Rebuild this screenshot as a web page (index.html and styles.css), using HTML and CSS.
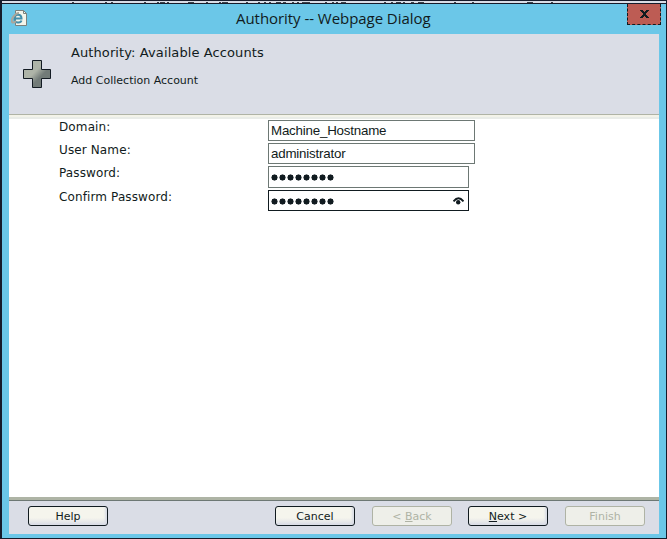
FILE: index.html
```html
<!DOCTYPE html>
<html lang="en">
<head>
<meta charset="utf-8">
<title>Authority -- Webpage Dialog</title>
<link rel="stylesheet" href="styles.css">
</head>
<body>
<div class="backdrop">
<svg width="667" height="2" shape-rendering="crispEdges"><path stroke="#3a414a" stroke-width="1" d="M72 1.500h2M105 1.500h2M111 1.500h2M144 1.500h2M157 1.500h2M160 1.500h5M167 1.500h2M188 1.500h6M206 1.500h2M219 1.500h2M222 1.500h6M246 1.500h2M258 1.500h2M264 1.500h2M269 1.500h2M276 1.500h5M283 1.500h3M292 1.500h2M297 1.500h2M302 1.500h8M325 1.500h2M332 1.500h2M336 1.500h2M341 1.500h5M384 1.500h2M391 1.500h2M396 1.500h5M403 1.500h2M411 1.500h3M418 1.500h6M454 1.500h2M472 1.500h2M527 1.500h6M551 1.500h2"/></svg>
</div>
<div class="window">
<header class="titlebar">
<svg class="ie" width="18" height="18" viewBox="0 0 18 18"><path d="M4.500 .5h8l3 3v12h-11z" fill="#f5f5eb" stroke="#7b817d"/><path d="M12.500 .5v3h3" fill="none" stroke="#7b817d"/><path d="M3.500 8.500h7c0-5-7-5-7 0s6 5 7 2" fill="none" stroke="#438eaa" stroke-width="2"/><path d="M8 3c-4 0-8 6-7 9 1 1 3 0 4-1" fill="none" stroke="#aaa69b" stroke-width="2"/></svg>
<h1 class="title">Authority -- Webpage Dialog</h1>
<button class="close" aria-label="Close"><svg width="9" height="8" viewBox="0 0 9 8" shape-rendering="crispEdges"><path fill="#111b20" d="M0 0h3v1h1v1h1V1h1V0h3v1H8v1H7v1H6v2h1v1h1v1h1v1H6V7H5V6H4v1H3v1H0V7h1V6h1V5h1V3H2V2H1V1H0z"/></svg></button>
</header>
<main class="content">
<section class="heading">
<svg class="plus" width="28" height="28" viewBox="0 0 28 28"><defs><linearGradient id="metal" x1="0" y1="0" x2="1" y2="1"><stop offset=".42" stop-color="#aeb4a8"/><stop offset=".62" stop-color="#727b78"/></linearGradient></defs><path d="M9.500 .5h9v9h9v9h-9v9h-9v-9h-9v-9h9z" fill="url(#metal)" stroke="#131b23"/></svg>
<div class="heading-text"><h2>Authority: Available Accounts</h2><p>Add Collection Account</p></div>
</section>
<div class="divider"></div>
<form class="form">
<label>Domain:</label><div class="field">Machine_Hostname</div>
<label>User Name:</label><div class="field">administrator</div>
<label>Password:</label><div class="field short"><span class="dots"></span></div>
<label>Confirm Password:</label><div class="field active"><span class="dots"></span><svg width="11" height="8" viewBox="0 0 11 8"><path d="M.5 4.500Q5.500-2 10.500 4.500" fill="none" stroke="#111b20" stroke-width="2"/><circle cx="5.200" cy="5.300" r="2.200" fill="#111b20"/></svg></div>
</form>
<footer class="footer">
<button class="btn help">Help</button>
<button class="btn">Cancel</button>
<button class="btn off back">&lt; <u>B</u>ack</button>
<button class="btn"><u>N</u>ext &gt;</button>
<button class="btn off">Finish</button>
</footer>
</main>
</div>
</body>
</html>
```
FILE: styles.css
```css
* { box-sizing: border-box; }
body { margin: 0; width: 667px; height: 539px; overflow: hidden; background: #161b2a; color: #111b20; font-family: Verdana, "DejaVu Sans", sans-serif; }
button { font: inherit; color: inherit; padding: 0; }
.backdrop { margin: 1px 1px 1px 2px; height: 2px; background: #dadde6; overflow: hidden; }
.backdrop svg { display: block; margin-left: -2px; }
.window { margin: 0 1px 0 2px; height: 534px; padding: 0 7px 4px; background: #6bc7e8; }
.titlebar { height: 30px; display: flex; align-items: flex-start; margin-right: -2px; }
.ie { margin: 6px 0 0 2px; flex: none; }
.title { margin: 3px 0 0 207px; font: 15px/22px "Open Sans", sans-serif; letter-spacing: -.05px; white-space: nowrap; flex: 1; }
.close { width: 34px; height: 21px; border: 1px dashed #111b20; border-top: 0; background: #bd5c54; display: grid; place-items: center; }
.content { height: 500px; display: flex; flex-direction: column; background: #fff; }
.heading { height: 80px; flex: none; display: flex; background: #dadde6; }
.plus { margin: 26px 0 0 14px; flex: none; }
.heading-text { margin-left: 20px; padding-top: 10px; white-space: nowrap; }
h2 { margin: 0; font-size: 13px; line-height: 17px; font-weight: 400; letter-spacing: .1px; }
p { margin: 12px 0 0; font-size: 11px; line-height: 16px; }
.divider { height: 5px; flex: none; border-top: 1px solid #afb3a5; background: linear-gradient(#f3f3e9 50%, #e9ece8 50%); }
.form { flex: 1; display: grid; grid-template-columns: 209px 207px; grid-template-rows: 23px 23px 24px 23px; padding: 1px 0 0 50px; align-content: start; }
label { font-size: 12px; line-height: 14px; white-space: nowrap; letter-spacing: .12px; }
.field { height: 21px; border: 1px solid #6d7874; padding-left: 2px; background: #fff; font: 13.333px/19px "Liberation Sans", Arial, sans-serif; letter-spacing: -.2px; display: flex; align-items: center; white-space: nowrap; }
.field.short { width: 201px; height: 22px; }
.field.active { width: 201px; border-color: #111b20; justify-content: space-between; padding-right: 4px; }
.dots { width: 64px; height: 7px; margin: 1px 0 0; background: radial-gradient(circle at 3.500px 3.500px, #111b20 2.800px, transparent 3.300px) 0 0 / 8px 7px; }
.footer { height: 37px; flex: none; display: flex; gap: 17px; padding: 5px 14px 0 19px; background: #dadde6; border-top: 3px solid #aeb4a5; box-shadow: inset 0 1px #6d7874; }
.btn { width: 80px; height: 20px; margin-top: 1px; padding-top: 1px; border: 1px solid #111b20; border-radius: 3px; background: linear-gradient(#f5f5ed 60%, #dadde6); box-shadow: inset -2px -1px 2px #dadde6; font: 11px/17px Verdana, "DejaVu Sans", sans-serif; white-space: nowrap; }
.help { margin-right: auto; }
.back { margin-right: -1px; }
.off { color: #afb3a5; border-color: #afb3a5; background: #eeefe9; box-shadow: none; }
```
